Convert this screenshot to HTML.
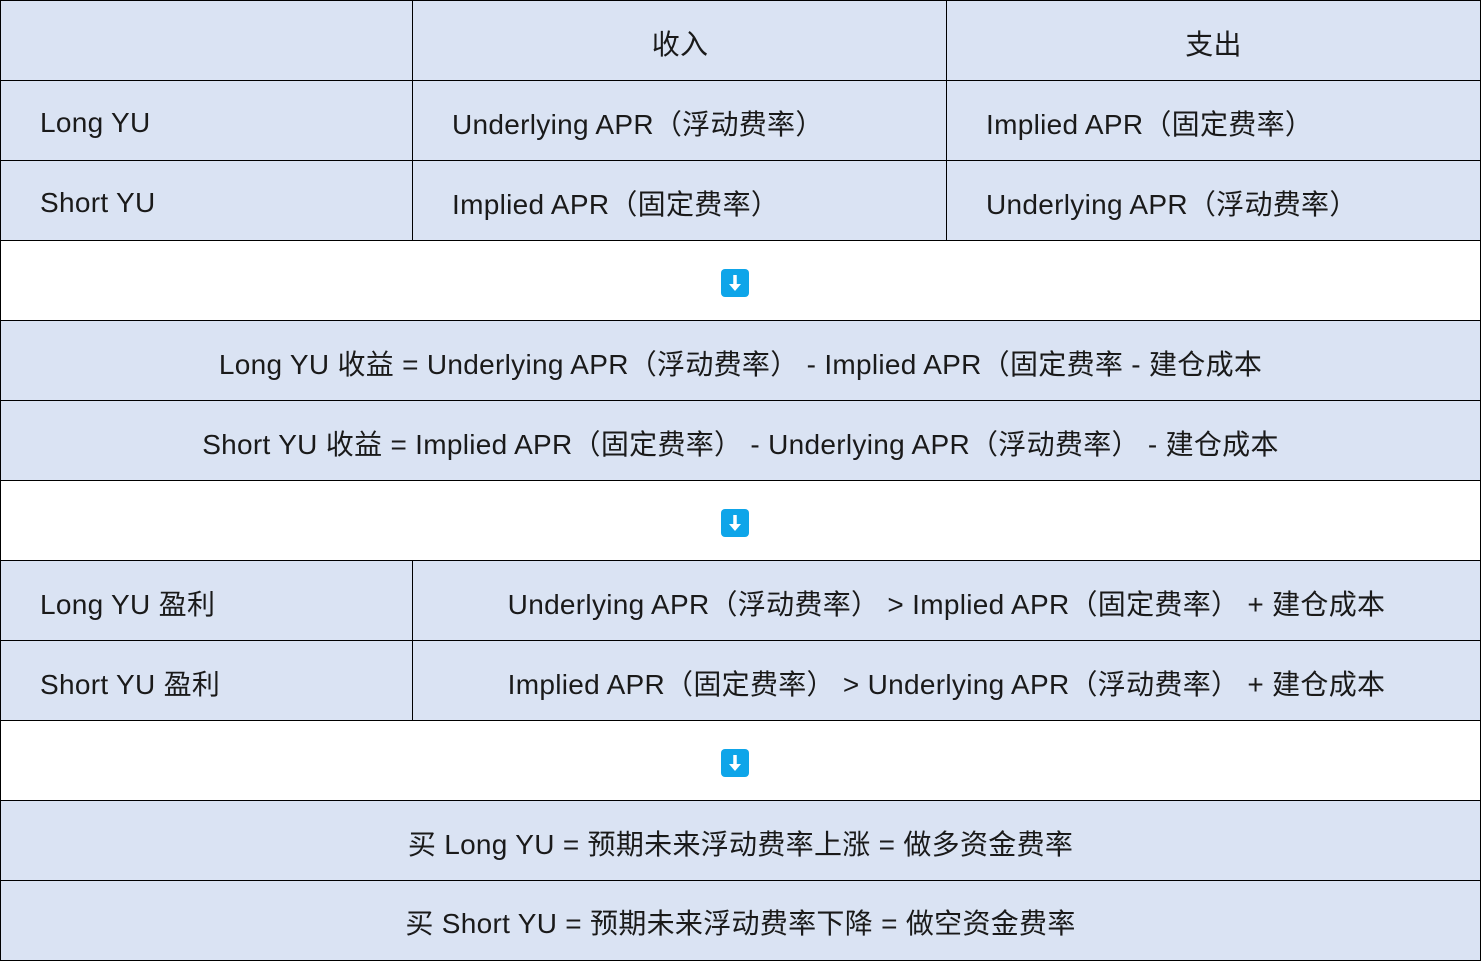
<!DOCTYPE html>
<html><head><meta charset="utf-8"><style>
body{margin:0;width:1481px;height:961px;background:#fff;position:relative;overflow:hidden;font-family:"Liberation Sans","Noto Sans CJK SC",sans-serif;color:#1a1a1a}
.c{position:absolute;box-sizing:border-box;border:1px solid #000;background:#dae3f3;display:flex;align-items:center;font-size:28px;letter-spacing:0.3px;white-space:nowrap;padding-top:3px}
.w{background:#fff;justify-content:center;padding-top:0}
.ctr{justify-content:center}
.l{padding-left:39px}
.ar{width:28px;height:28px;background:#0ea5e9;border-radius:4px;position:relative;margin-right:11px;margin-top:4px}
.ar svg{position:absolute;left:0;top:0}
</style></head><body>
<div class="c" style="left:0;top:0;width:414px;height:82px"></div>
<div class="c ctr" style="left:412px;top:0;width:536px;height:82px">收入</div>
<div class="c ctr" style="left:946px;top:0;width:535px;height:82px">支出</div>

<div class="c l" style="left:0;top:80px;width:414px;height:82px">Long YU</div>
<div class="c l" style="left:412px;top:80px;width:536px;height:82px">Underlying APR（浮动费率）</div>
<div class="c l" style="left:946px;top:80px;width:535px;height:82px">Implied APR（固定费率）</div>

<div class="c l" style="left:0;top:160px;width:414px;height:82px">Short YU</div>
<div class="c l" style="left:412px;top:160px;width:536px;height:82px">Implied APR（固定费率）</div>
<div class="c l" style="left:946px;top:160px;width:535px;height:82px">Underlying APR（浮动费率）</div>

<div class="c w" style="left:0;top:240px;width:1481px;height:82px"><div class="ar"><svg width="28" height="28"><path d="M14 6v12" stroke="#fff" stroke-width="3.5"/><path d="M8 15h12l-6 7z" fill="#fff"/></svg></div></div>

<div class="c ctr" style="left:0;top:320px;width:1481px;height:82px">Long YU 收益 = Underlying APR（浮动费率） - Implied APR（固定费率 - 建仓成本</div>
<div class="c ctr" style="left:0;top:400px;width:1481px;height:82px">Short YU 收益 = Implied APR（固定费率） - Underlying APR（浮动费率） - 建仓成本</div>

<div class="c w" style="left:0;top:480px;width:1481px;height:82px"><div class="ar"><svg width="28" height="28"><path d="M14 6v12" stroke="#fff" stroke-width="3.5"/><path d="M8 15h12l-6 7z" fill="#fff"/></svg></div></div>

<div class="c l" style="left:0;top:560px;width:414px;height:82px">Long YU 盈利</div>
<div class="c ctr" style="left:412px;top:560px;width:1069px;height:82px">Underlying APR（浮动费率） &gt; Implied APR（固定费率） + 建仓成本</div>
<div class="c l" style="left:0;top:640px;width:414px;height:82px">Short YU 盈利</div>
<div class="c ctr" style="left:412px;top:640px;width:1069px;height:82px">Implied APR（固定费率） &gt; Underlying APR（浮动费率） + 建仓成本</div>

<div class="c w" style="left:0;top:720px;width:1481px;height:82px"><div class="ar"><svg width="28" height="28"><path d="M14 6v12" stroke="#fff" stroke-width="3.5"/><path d="M8 15h12l-6 7z" fill="#fff"/></svg></div></div>

<div class="c ctr" style="left:0;top:800px;width:1481px;height:82px">买 Long YU = 预期未来浮动费率上涨 = 做多资金费率</div>
<div class="c ctr" style="left:0;top:880px;width:1481px;height:81px">买 Short YU = 预期未来浮动费率下降 = 做空资金费率</div>
</body></html>
